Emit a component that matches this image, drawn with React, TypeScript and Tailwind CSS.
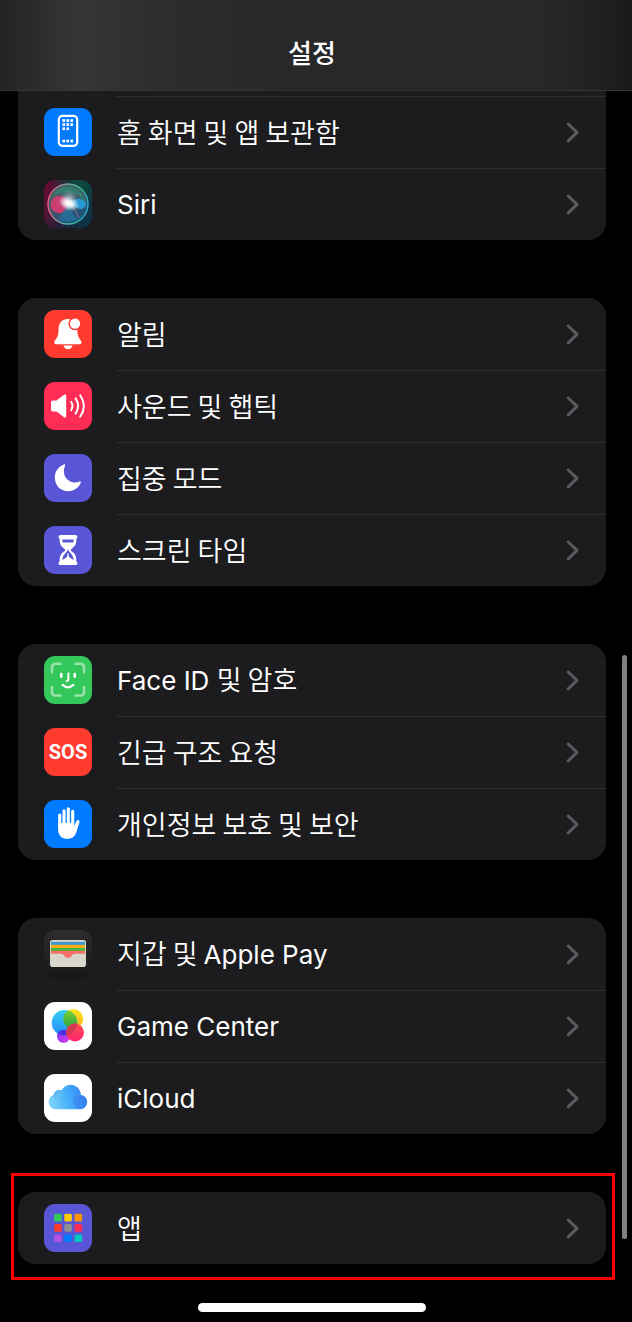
import type { ReactNode } from 'react';

const KO = "font-['Noto_Sans_CJK_KR',sans-serif] text-[27px] font-[350]";
const EN = "font-['Inter',sans-serif] text-[26px] font-normal";

type Item = { id: string; parts: { text: string; ko?: boolean }[]; icon: ReactNode };

function Tile({ fill, children }: { fill: string; children: ReactNode }) {
  return (
    <svg viewBox="0 0 48 48" className="size-12 shrink-0" aria-hidden="true">
      <rect width="48" height="48" rx="11" fill={fill} />
      {children}
    </svg>
  );
}

const homeDots = [
  [18.4, 11.2], [22.4, 11.2], [26.4, 11.2],
  [18.4, 15.2], [22.4, 15.2], [26.4, 15.2],
  [18.4, 19.4], [22.4, 19.4],
  [18.4, 31.7], [22.4, 31.7], [26.4, 31.7],
];

const HomeIcon = (
  <Tile fill="#007aff">
    <rect x="14.8" y="7.9" width="18.4" height="30" rx="3.6" fill="none" stroke="#fff" strokeWidth="2.2" />
    {homeDots.map(([x, y]) => (
      <rect key={`${x}-${y}`} x={x} y={y} width="2.7" height="2.7" fill="#fff" />
    ))}
  </Tile>
);

const SiriIcon = (
  <Tile fill="url(#siri-bg)">
    <defs>
      <linearGradient id="siri-bg" x1="0" y1="0.3" x2="1" y2="0.6">
        <stop offset="0" stopColor="#660c31" />
        <stop offset="0.45" stopColor="#25203b" />
        <stop offset="1" stopColor="#0b3448" />
      </linearGradient>
      <radialGradient id="siri-green" cx="0.75" cy="0.05" r="0.6">
        <stop offset="0" stopColor="#0b4b3c" />
        <stop offset="1" stopColor="#0b4b3c" stopOpacity="0" />
      </radialGradient>
      <linearGradient id="siri-orb" x1="0.2" y1="0" x2="0.7" y2="1">
        <stop offset="0" stopColor="#3d7a6c" />
        <stop offset="0.5" stopColor="#466577" />
        <stop offset="1" stopColor="#145b8c" />
      </linearGradient>
      <linearGradient id="siri-ring" x1="0" y1="0.4" x2="1" y2="0.6">
        <stop offset="0" stopColor="#e95a80" />
        <stop offset="0.45" stopColor="#6fa99c" />
        <stop offset="0.8" stopColor="#2cb98a" />
        <stop offset="1" stopColor="#33a4d2" />
      </linearGradient>
      <radialGradient id="siri-glow">
        <stop offset="0" stopColor="#fff" />
        <stop offset="0.35" stopColor="#fff" stopOpacity="0.85" />
        <stop offset="1" stopColor="#d5eaff" stopOpacity="0" />
      </radialGradient>
    </defs>
    <rect width="48" height="48" rx="11" fill="url(#siri-green)" />
    <circle cx="24" cy="24" r="20" fill="url(#siri-orb)" opacity="0.8" />
    <circle cx="24" cy="24" r="20" fill="none" stroke="url(#siri-ring)" strokeWidth="1.4" />
    <path d="M8 18Q13 5 27 7Q41 11 42 25Q37 14 26 12Q14 11 8 18Z" fill="#33a37f" opacity="0.4" />
    <path d="M26 24C21 13 10 14 7.500 21C4 30 13 36 20 32C24 29 25 27 26 24Z" fill="#e23b72" opacity="0.85" />
    <path d="M26 24C32 15 41 19 42 24C41 31 33 30 26 24Z" fill="#27a4e5" opacity="0.85" />
    <path d="M25 24Q16 34 15 40Q25 44 34 39Q27 34 25 24Z" fill="#2579a9" opacity="0.6" />
    <path d="M26 25Q33 31 35 38" stroke="#d77da4" strokeWidth="1" fill="none" opacity="0.7" />
    <ellipse cx="25" cy="20.500" rx="9" ry="11" fill="url(#siri-glow)" opacity="0.45" />
    <ellipse cx="25" cy="23.500" rx="11" ry="7" fill="url(#siri-glow)" transform="rotate(20 25 23.500)" />
  </Tile>
);

const BellIcon = (
  <Tile fill="#ff3b30">
    <path
      d="M24 9C18 9 14.900 13 14.600 18.500C14.400 25 14 26.800 11.200 30.200C9.400 32.500 10.200 34.200 12.200 34.200H35.500C37.600 34.200 38.300 32.500 36.600 30.200C34 26.800 33.500 25 33.300 18.500C33 13 30 9 24 9Z"
      fill="#fff"
    />
    <circle cx="31" cy="13.600" r="6.600" fill="#ff3b30" />
    <circle cx="31" cy="13.600" r="5.200" fill="#fff" />
    <path d="M19.500 35.600H28.500C28 38 26.200 39.200 24 39.200C21.800 39.200 20 38 19.500 35.600Z" fill="#fff" />
  </Tile>
);

const SoundIcon = (
  <Tile fill="#ff2d55">
    <path
      d="M9 18.600H12.500L20 12.800C21 12 22.200 12.600 22.200 13.800V34.200C22.200 35.400 21 36 20 35.200L12.500 29.400H9C7.600 29.400 7 28.700 7 27.500V20.500C7 19.300 7.600 18.600 9 18.600Z"
      fill="#fff"
    />
    <g fill="none" stroke="#fff" strokeWidth="2" strokeLinecap="round">
      <path d="M27.200 19.800Q29.700 24 27.200 28.200" />
      <path d="M31.600 16.400Q36.500 24 31.600 31.600" />
      <path d="M36.200 13.200Q43.600 24 36.200 34.800" />
    </g>
  </Tile>
);

const MoonIcon = (
  <Tile fill="#5856d6">
    <path
      d="M19.800 10.600C20.700 9.900 21.500 10.500 21 11.700C16.800 22 25.500 31.300 35.500 27.600C36.700 27.200 37.200 27.900 36.700 29C30.500 42.500 10.800 38.500 10.800 23.500C10.800 17.500 14.500 12.700 19.800 10.600Z"
      fill="#fff"
    />
  </Tile>
);

const HourglassIcon = (
  <Tile fill="#5856d6">
    <path
      d="M16.500 9H31.500C33.900 9 33.900 12.400 32.300 12.600C32.600 18.500 30.800 20.500 27.800 22.500C26.500 23.400 26.500 24.600 27.800 25.500C30.800 27.500 32.600 29.500 32.300 35.400C33.900 35.600 33.900 39 31.500 39H16.500C14.100 39 14.100 35.600 15.700 35.400C15.400 29.500 17.200 27.500 20.200 25.500C21.500 24.600 21.500 23.400 20.200 22.500C17.200 20.500 15.400 18.500 15.700 12.600C14.100 12.400 14.100 9 16.500 9Z"
      fill="#fff"
    />
    <path d="M18.400 13.400H29.600C29.800 14.600 29.600 15.800 29 16.600H19C18.400 15.800 18.200 14.600 18.400 13.400Z" fill="#5856d6" />
    <path
      d="M24 23.200C24.800 26.800 29.400 27.800 29.600 34L25.600 31.400C24.800 30.800 24.500 29 24.500 27H23.500C23.500 29 23.200 30.800 22.400 31.400L18.400 34C18.600 27.800 23.200 26.800 24 23.200Z"
      fill="#5856d6"
    />
  </Tile>
);

const FaceIdIcon = (
  <Tile fill="#34c759">
    <path
      d="M7.900 16.200V12Q7.900 7.800 12 7.800H16.600M31.400 7.800H36Q40.100 7.800 40.100 12V16.200M40.100 31V35.500Q40.100 39.600 36 39.600H31.400M16.600 39.600H12Q7.900 39.600 7.900 35.500V31"
      fill="none"
      stroke="#9be3ac"
      strokeWidth="2.500"
      strokeLinecap="round"
    />
    <g fill="none" stroke="#fff" strokeWidth="2.500" strokeLinecap="round">
      <path d="M17.300 18V20.700M30.700 18V20.700" />
      <path d="M24.400 17.500V23.500Q24.400 24.800 22.700 24.900" strokeWidth="2" />
      <path d="M18.600 28.900Q24 33.700 29.400 28.900" strokeWidth="2.200" />
    </g>
  </Tile>
);

const SosIcon = (
  <span className="flex size-12 shrink-0 items-center justify-center rounded-[11px] bg-[#ff3b30] font-['Roboto',sans-serif] text-[20px] font-bold leading-none">
    SOS
  </span>
);

const HandIcon = (
  <Tile fill="#007aff">
    <g fill="none" stroke="#fff" strokeWidth="3.100" strokeLinecap="round">
      <path d="M15.700 15V27" />
      <path d="M20 10.700V25" />
      <path d="M24.300 8.700V25" />
      <path d="M28.700 11.300V27" />
      <path d="M34 21.700L30.500 30" />
    </g>
    <path
      d="M14.100 23H30.200V26.500L32.500 21.300L35.400 22.300L32.600 31.500C31 36.500 28.500 38.800 23.700 38.800C17.500 38.800 14.100 35.500 14.100 29Z"
      fill="#fff"
    />
  </Tile>
);

const WalletIcon = (
  <Tile fill="url(#wallet-bg)">
    <defs>
      <linearGradient id="wallet-bg" x1="0" y1="0" x2="0" y2="1">
        <stop offset="0" stopColor="#2e2e2e" />
        <stop offset="1" stopColor="#171717" />
      </linearGradient>
      <clipPath id="wallet-cards">
        <rect x="7" y="11" width="34" height="25" rx="1.800" />
      </clipPath>
    </defs>
    <rect x="6" y="10" width="36" height="27" rx="2.800" fill="#d9d6ce" />
    <g clipPath="url(#wallet-cards)">
      <rect x="7" y="11.800" width="34" height="4" fill="#3a96d0" />
      <rect x="7" y="14.800" width="34" height="4" fill="#f9ab18" />
      <rect x="7" y="18" width="34" height="4" fill="#45b438" />
      <rect x="7" y="20.800" width="34" height="10" fill="#f47067" />
      <path
        d="M7 23.700H16.500C19 23.700 19.300 24.600 20.300 26C21.300 27.300 22.500 27.800 24 27.800C25.500 27.800 26.700 27.300 27.700 26C28.700 24.600 29 23.700 31.500 23.700H41V37H7Z"
        fill="#d9d6ce"
      />
    </g>
  </Tile>
);

const GameIcon = (
  <Tile fill="#fff">
    <defs>
      <linearGradient id="gc-blue" x1="0" y1="0" x2="0" y2="1">
        <stop offset="0" stopColor="#35d0f5" />
        <stop offset="1" stopColor="#2389f8" />
      </linearGradient>
      <linearGradient id="gc-yellow" x1="0" y1="0" x2="0" y2="1">
        <stop offset="0" stopColor="#fbe71a" />
        <stop offset="1" stopColor="#ffb01d" />
      </linearGradient>
      <linearGradient id="gc-pink" x1="0" y1="0" x2="0" y2="1">
        <stop offset="0" stopColor="#ff4e4e" />
        <stop offset="1" stopColor="#ff2472" />
      </linearGradient>
      <linearGradient id="gc-purple" x1="0" y1="0" x2="1" y2="0.600">
        <stop offset="0" stopColor="#8e35f5" />
        <stop offset="1" stopColor="#c83bf2" />
      </linearGradient>
      <linearGradient id="gc-green" x1="0" y1="0" x2="0" y2="1">
        <stop offset="0" stopColor="#7fd02c" />
        <stop offset="1" stopColor="#2ca34b" />
      </linearGradient>
      <clipPath id="gc-clip">
        <circle cx="20.500" cy="20.700" r="12.800" />
      </clipPath>
    </defs>
    <circle cx="19.500" cy="34.300" r="6.500" fill="url(#gc-purple)" />
    <circle cx="29.200" cy="17" r="10" fill="url(#gc-yellow)" />
    <circle cx="20.500" cy="20.700" r="12.800" fill="url(#gc-blue)" />
    <g clipPath="url(#gc-clip)">
      <circle cx="19.500" cy="34.300" r="6.500" fill="#4b2fe0" />
      <circle cx="29.200" cy="17" r="10" fill="url(#gc-green)" />
    </g>
    <circle cx="31" cy="30.500" r="9" fill="url(#gc-pink)" />
    <g clipPath="url(#gc-clip)">
      <circle cx="31" cy="30.500" r="9" fill="#d5384f" />
    </g>
  </Tile>
);

const CloudIcon = (
  <Tile fill="#fff">
    <defs>
      <linearGradient id="cloud" x1="0" y1="0.600" x2="1" y2="0.400">
        <stop offset="0" stopColor="#7fd3fa" />
        <stop offset="0.500" stopColor="#44adfa" />
        <stop offset="1" stopColor="#3b80f0" />
      </linearGradient>
      <linearGradient id="cloud-puff" x1="0" y1="0" x2="1" y2="1">
        <stop offset="0" stopColor="#4fabea" />
        <stop offset="0.700" stopColor="#73cbf8" stopOpacity="0" />
      </linearGradient>
    </defs>
    <path
      d="M12 35.200C7.600 35.200 4.600 32 4.600 28C4.600 24.500 6.600 21.800 9.500 20.900C10.500 17 14 15 17.600 16.300C19.400 12.900 22.500 10.800 26.500 10.800C32 10.800 36.500 15 37 20.900C40.700 21.300 43.200 24.400 43.200 28C43.200 32 40.100 35.200 36 35.200Z"
      fill="url(#cloud)"
    />
    <circle cx="15.600" cy="21.800" r="6" fill="url(#cloud-puff)" />
    <path d="M37 20.900C33 20.500 30 23 28.900 26.500C28.500 29.500 31 33.500 36 35.200C45 34.500 45 22 37 20.900Z" fill="#347cf0" opacity="0.450" />
  </Tile>
);

const appColors = [
  '#34c759', '#ffcc00', '#ff9500',
  '#ff3b30', '#8e8e93', '#ff2d55',
  '#af52de', '#007aff', '#00c7be',
];

const AppsIcon = (
  <Tile fill="#5856d6">
    {appColors.map((color, i) => (
      <rect key={color} x={10.1 + (i % 3) * 10.2} y={9.8 + Math.floor(i / 3) * 10.3} width="7.600" height="7.600" rx="1.500" fill={color} />
    ))}
  </Tile>
);

const ko = (text: string) => ({ text, ko: true });

const groups: Item[][] = [
  [
    { id: 'home', parts: [ko('홈 화면 및 앱 보관함')], icon: HomeIcon },
    { id: 'siri', parts: [{ text: 'Siri' }], icon: SiriIcon },
  ],
  [
    { id: 'notifications', parts: [ko('알림')], icon: BellIcon },
    { id: 'sound', parts: [ko('사운드 및 햅틱')], icon: SoundIcon },
    { id: 'focus', parts: [ko('집중 모드')], icon: MoonIcon },
    { id: 'screen-time', parts: [ko('스크린 타임')], icon: HourglassIcon },
  ],
  [
    { id: 'face-id', parts: [{ text: 'Face ID ' }, ko('및 암호')], icon: FaceIdIcon },
    { id: 'sos', parts: [ko('긴급 구조 요청')], icon: SosIcon },
    { id: 'privacy', parts: [ko('개인정보 보호 및 보안')], icon: HandIcon },
  ],
  [
    { id: 'wallet', parts: [ko('지갑 및 '), { text: 'Apple Pay' }], icon: WalletIcon },
    { id: 'game-center', parts: [{ text: 'Game Center' }], icon: GameIcon },
    { id: 'icloud', parts: [{ text: 'iCloud' }], icon: CloudIcon },
  ],
  [{ id: 'apps', parts: [ko('앱')], icon: AppsIcon }],
];

function Row({ item, divider }: { item: Item; divider: boolean }) {
  return (
    <li>
      <a href={`#${item.id}`} className="flex h-[72px] items-center gap-6 pl-[26px]">
        {item.icon}
        <span className={`flex h-full flex-1 items-center justify-between border-t pr-[26px] ${divider ? 'border-[#2e2e30]' : 'border-transparent'}`}>
          <span className={`${KO} whitespace-pre pb-0.5 pl-px leading-9`}>
            {item.parts.map((p) => (
              <span key={p.text} className={p.ko ? KO : EN}>{p.text}</span>
            ))}
          </span>
          <svg viewBox="0 0 14 22" className="h-[22px] w-[14px] shrink-0" fill="none" stroke="#5b5b5f" strokeWidth="3" strokeLinecap="round" strokeLinejoin="round" aria-hidden="true">
            <path d="M2.200 2L11 10.400L2.200 18.800" />
          </svg>
        </span>
      </a>
    </li>
  );
}

export default function App() {
  return (
    <div className="relative min-h-screen bg-black text-white">
      <header className="flex h-[91px] items-end justify-center border-b border-[#353536] bg-[linear-gradient(90deg,#232424_0%,#2b2b2c_6%,#363637_12%,#313233_18%,#2b2c2c_28%,#282828_45%,#282828_85%,#232323_92%,#1a1a1a_100%)] pr-2 pb-5">
        <h1 className="font-['Noto_Sans_CJK_KR',sans-serif] text-[26px] font-medium leading-9">설정</h1>
      </header>

      <main className="flex flex-col gap-[58px] pr-[26px] pl-[18px]">
        {groups.map((items, g) => (
          <section key={items[0].id} className="relative">
            <ul className={`bg-[#1c1c1e] ${g === 0 ? 'rounded-b-[18px] pt-[5px]' : 'rounded-[18px]'}`}>
              {items.map((item, i) => (
                <Row key={item.id} item={item} divider={g === 0 || i > 0} />
              ))}
            </ul>
            {g === groups.length - 1 && (
              <div className="pointer-events-none absolute -top-[19px] -right-[9px] -bottom-4 -left-[7px] border-3 border-[#ff0000]" />
            )}
          </section>
        ))}
      </main>

      <div className="flex justify-center pt-[39px] pr-2 pb-[10px]">
        <div className="h-[9px] w-[228px] rounded-full bg-white" />
      </div>

      <div className="absolute top-[655px] right-[5px] h-[584px] w-[5px] rounded-full bg-[#808080]" />
    </div>
  );
}
